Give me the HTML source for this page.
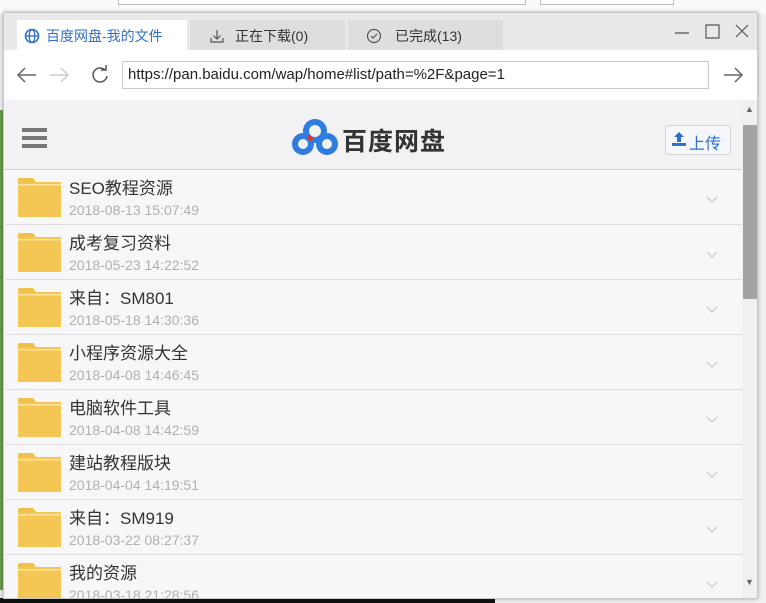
<!DOCTYPE html>
<html><head><meta charset="utf-8"><style>
*{margin:0;padding:0;box-sizing:border-box}
body{width:766px;height:603px;overflow:hidden;background:#f0f0f0;font-family:"Liberation Sans","Noto Sans CJK SC",sans-serif;position:relative}
.abs{position:absolute}
.row{position:absolute;left:6px;width:736px;height:55px;background:#f7f7f9;border-bottom:1px solid #dcdcdc}
.fold{position:absolute;left:12px;top:8px;width:43px;height:39px}
.name{position:absolute;left:63px;top:4px;font-size:17px;color:#333}
.date{position:absolute;left:63px;top:32px;font-size:14px;color:#b0b0b0}
.chev{position:absolute;left:700px;top:26px;width:12px;height:8px}
</style></head><body>
<div class="abs" style="left:0;top:0;width:766px;height:14px;background:#fafafa"></div>
<div class="abs" style="left:118px;top:0;width:408px;height:5px;border:1px solid #bbb;border-top:none;background:#fff"></div>
<div class="abs" style="left:540px;top:0;width:134px;height:5px;border:1px solid #bbb;border-top:none;background:#fff"></div>
<div class="abs" style="left:0;top:598px;width:495px;height:5px;background:#111"></div>
<div class="abs" style="left:0;top:110px;width:3px;height:480px;background:#6a9a4a"></div>
<div class="abs" style="left:3px;top:12px;width:755px;height:587px;background:#fff;border:1px solid #c8c8c8;box-shadow:0 0 4px rgba(0,0,0,.3)"></div>
<div class="abs" style="left:4px;top:13px;width:753px;height:37px;background:#e9e9e9"></div>
<div class="abs" style="left:17px;top:20px;width:170px;height:31px;background:#fff"></div>
<div class="abs" style="left:190px;top:20px;width:155px;height:30px;background:#dedede"></div>
<div class="abs" style="left:348px;top:20px;width:155px;height:30px;background:#dedede"></div>
<svg class="abs" style="left:24px;top:28px" width="16" height="16" viewBox="0 0 16 16"><circle cx="8" cy="8" r="6.5" fill="none" stroke="#2f6fd0" stroke-width="1.6"/><ellipse cx="8" cy="8" rx="2.8" ry="6.5" fill="none" stroke="#2f6fd0" stroke-width="1.3"/><line x1="1.5" y1="8" x2="14.5" y2="8" stroke="#2f6fd0" stroke-width="1.3"/></svg>
<div class="abs" style="left:46px;top:26px;font-size:14px;color:#2f6fd0">百度网盘-我的文件</div>
<svg class="abs" style="left:209px;top:28px" width="16" height="16" viewBox="0 0 16 16" fill="none" stroke="#555" stroke-width="1.2"><path d="M8 2v9M4.5 7.5L8 11l3.5-3.5M2 10v4h12v-4"/></svg>
<div class="abs" style="left:235px;top:26px;font-size:14px;color:#333">正在下载(0)</div>
<svg class="abs" style="left:366px;top:28px" width="16" height="16" viewBox="0 0 16 16" fill="none" stroke="#555" stroke-width="1.2"><circle cx="8" cy="8" r="6.5"/><path d="M5 8l2 2 4-4"/></svg>
<div class="abs" style="left:395px;top:26px;font-size:14px;color:#333">已完成(13)</div>
<svg class="abs" style="left:672px;top:22px" width="80" height="20" viewBox="0 0 80 20" fill="none" stroke="#555" stroke-width="1.2"><path d="M3 11h14M34 3h13v13H34zM64 3l12 12M76 3L64 15"/></svg>
<svg class="abs" style="left:14px;top:64px" width="100" height="22" viewBox="0 0 100 22" fill="none" stroke-width="1.5"><path d="M22 11H4M11 4l-7 7 7 7" stroke="#666"/><path d="M36 11h18M47 4l7 7-7 7" stroke="#ccc"/><path d="M91 6a7 7 0 1 0 2 6" stroke="#555"/><path d="M87 5h5V0" stroke="#555" transform="translate(0,1)"/></svg>
<div class="abs" style="left:122px;top:61px;width:587px;height:28px;border:1px solid #c9c9c9;background:#fff;font-size:15px;color:#222;padding:4px 5px">https://pan.baidu.com/wap/home#list/path=%2F&amp;page=1</div>
<svg class="abs" style="left:722px;top:64px" width="24" height="22" viewBox="0 0 24 22" fill="none" stroke="#666" stroke-width="1.5"><path d="M2 11h18M13 4l7 7-7 7"/></svg>
<div class="abs" style="left:4px;top:100px;width:738px;height:498px;background:#f6f6f8"></div>
<div class="abs" style="left:4px;top:100px;width:738px;height:70px;background:#f2f2f4;border-bottom:1px solid #d5d5d5"></div>
<div class="abs" style="left:22px;top:128px;width:25px;height:4px;background:#777;box-shadow:0 8px 0 #777,0 16px 0 #777"></div>
<svg class="abs" style="left:291px;top:118px" width="48" height="38" viewBox="0 0 48 38"><circle cx="24" cy="13" r="9" fill="none" stroke="#2f7de1" stroke-width="6"/><circle cx="12" cy="26" r="8" fill="none" stroke="#2f7de1" stroke-width="6"/><circle cx="36" cy="26" r="8" fill="none" stroke="#2f7de1" stroke-width="6"/><path d="M17 18l4 4" stroke="#e03030" stroke-width="4"/></svg>
<div class="abs" style="left:342px;top:122px;font-size:25px;color:#333;font-weight:bold;letter-spacing:1px">百度网盘</div>
<div class="abs" style="left:665px;top:125px;width:66px;height:30px;border:1px solid #d5d5d5;border-radius:3px;background:#f5f7fa;font-size:16px;color:#2f6fd0;padding:4px 0 0 23px">上传</div>
<svg class="abs" style="left:671px;top:131px" width="16" height="16" viewBox="0 0 16 16" fill="#2f6fd0"><path d="M8 1l5 5H10v5H6V6H3z"/><rect x="1" y="12" width="14" height="3"/></svg>
<div class="abs" style="left:742px;top:100px;width:15px;height:498px;background:#f0f0f0"></div>
<div class="abs" style="left:743px;top:125px;width:14px;height:174px;background:#a3a3a3"></div>
<div class="abs" style="left:745px;top:104px;font-size:9px;color:#666">▲</div>
<div class="abs" style="left:745px;top:577px;font-size:9px;color:#666">▼</div>
<div class="row" style="top:170px"><svg class="fold"><use href="#f"/></svg><div class="name">SEO教程资源</div><div class="date">2018-08-13 15:07:49</div><svg class="chev"><use href="#c"/></svg></div>
<div class="row" style="top:225px"><svg class="fold"><use href="#f"/></svg><div class="name">成考复习资料</div><div class="date">2018-05-23 14:22:52</div><svg class="chev"><use href="#c"/></svg></div>
<div class="row" style="top:280px"><svg class="fold"><use href="#f"/></svg><div class="name">来自：SM801</div><div class="date">2018-05-18 14:30:36</div><svg class="chev"><use href="#c"/></svg></div>
<div class="row" style="top:335px"><svg class="fold"><use href="#f"/></svg><div class="name">小程序资源大全</div><div class="date">2018-04-08 14:46:45</div><svg class="chev"><use href="#c"/></svg></div>
<div class="row" style="top:390px"><svg class="fold"><use href="#f"/></svg><div class="name">电脑软件工具</div><div class="date">2018-04-08 14:42:59</div><svg class="chev"><use href="#c"/></svg></div>
<div class="row" style="top:445px"><svg class="fold"><use href="#f"/></svg><div class="name">建站教程版块</div><div class="date">2018-04-04 14:19:51</div><svg class="chev"><use href="#c"/></svg></div>
<div class="row" style="top:500px"><svg class="fold"><use href="#f"/></svg><div class="name">来自：SM919</div><div class="date">2018-03-22 08:27:37</div><svg class="chev"><use href="#c"/></svg></div>
<div class="row" style="top:555px;height:43px;overflow:hidden;border:none"><svg class="fold"><use href="#f"/></svg><div class="name">我的资源</div><div class="date">2018-03-18 21:28:56</div><svg class="chev"><use href="#c"/></svg></div>
<svg width="0" height="0" style="position:absolute"><defs>
<g id="f"><path d="M0 2a2 2 0 0 1 2-2h13l3 4h25v35H0z" fill="#f0c04a"/><rect x="0" y="4" width="43" height="35" fill="#f4c654"/><rect x="0" y="6" width="43" height="1.5" fill="#fbe3a0"/></g>
<path id="c" d="M1 1l5 5 5-5" fill="none" stroke="#ccc" stroke-width="1.3"/>
</defs></svg>
</body></html>
